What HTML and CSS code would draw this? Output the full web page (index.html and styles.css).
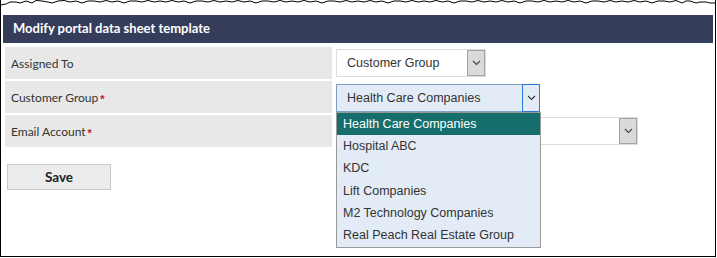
FILE: index.html
```html
<!DOCTYPE html>
<html lang="en">

<head>
    <meta charset="UTF-8">
    <title>Modify portal data sheet template</title>
    <link rel="stylesheet" href="styles.css">
</head>

<body>

    <div class="frame">
        <svg class="torn-edge" width="716" height="8" viewBox="0 0 716 8">
            <polyline fill="none" stroke="#000" stroke-width="1"
                points="0.5,6 6,5 10,3 16,3 20,4 26,2 32,4 36,1.5 42,2 48,3 52,4 58,2 64,1.5 70,3 76,2 82,4 88,2 94,2 100,3 106,1.5 112,3 118,2 124,4 130,2 136,2 142,3 148,1.5 154,3 160,2 166,3 172,1.5 178,3 184,2 190,4 196,2 202,2 208,3 214,1.5 220,3 226,2 232,3 238,1.5 244,3 250,2 256,4 262,2 268,2 274,3 280,1.5 286,3 292,2 298,3 304,1.5 310,3 316,2 322,4 328,2 334,2 340,3 346,1.5 352,3 358,2 364,3 370,1.5 376,3 382,2 388,4 394,2 400,2 406,3 412,1.5 418,3 424,2 430,3 436,1.5 442,3 448,2 454,4 460,2 466,2 472,3 478,1.5 484,3 490,2 496,3 502,1.5 508,3 514,2 520,4 526,2 532,2 538,3 544,1.5 550,3 556,2 562,3 568,1.5 574,3 580,2 586,4 592,2 598,2 604,3 610,1.5 616,3 622,2 628,3 634,1.5 640,3 646,2 652,4 658,2 664,2 670,3 676,1.5 682,4 686,2 690,2 696,4 700,3 706,3 710,4 715.5,4" />
        </svg>

        <div class="panel-header">Modify portal data sheet template</div>

        <div class="form-grid">
            <div class="label-cell">Assigned To</div>
            <div class="value-cell">
                <div class="select select-small">
                    <span class="select-text">Customer Group</span>
                    <span class="select-arrow">
                        <svg width="9" height="6" viewBox="0 0 9 6"><polyline points="1,1 4.5,4.5 8,1" fill="none" stroke="#444" stroke-width="1.1" /></svg>
                    </span>
                </div>
            </div>

            <div class="label-cell">Customer Group<span class="required">*</span></div>
            <div class="value-cell">
                <div class="select select-medium select-open">
                    <span class="select-text">Health Care Companies</span>
                    <span class="select-arrow">
                        <svg width="9" height="6" viewBox="0 0 9 6"><polyline points="1,1 4.5,4.5 8,1" fill="none" stroke="#333" stroke-width="1.1" /></svg>
                    </span>

                    <ul class="dropdown-list">
                        <li class="selected">Health Care Companies</li>
                        <li>Hospital ABC</li>
                        <li>KDC</li>
                        <li>Lift Companies</li>
                        <li>M2 Technology Companies</li>
                        <li>Real Peach Real Estate Group</li>
                    </ul>
                </div>
            </div>

            <div class="label-cell">Email Account<span class="required">*</span></div>
            <div class="value-cell">
                <div class="select select-wide">
                    <span class="select-text"></span>
                    <span class="select-arrow">
                        <svg width="9" height="6" viewBox="0 0 9 6"><polyline points="1,1 4.5,4.5 8,1" fill="none" stroke="#444" stroke-width="1.1" /></svg>
                    </span>
                </div>
            </div>
        </div>

        <button class="btn-save">Save</button>
    </div>

</body>

</html>
```

FILE: styles.css
```css
* {
    margin: 0;
    padding: 0;
    box-sizing: border-box;
}

body {
    background-color: #fff;
    font-family: Lato, "Liberation Sans", sans-serif;
}

.frame {
    position: relative;
    width: 716px;
    height: 257px;
    border: 1px solid #000;
    border-top: none;
    padding: 15px 2px 0 2px;
}

.torn-edge {
    position: absolute;
    top: -1px;
    left: -1px;
}

.panel-header {
    height: 28px;
    background-color: #363d5b;
    border-bottom: 1px solid #2f4a5c;
    color: #fff;
    font-weight: 700;
    font-size: 13px;
    line-height: 27px;
    padding-left: 10px;
}

.form-grid {
    display: grid;
    grid-template-columns: 327px 1fr;
    grid-auto-rows: 32px;
    row-gap: 2px;
    margin: 4px 0 0 2px;
}

.label-cell {
    background-color: #e8e8e8;
    color: #333;
    font-size: 12px;
    display: flex;
    align-items: center;
    padding-left: 6px;
}

.required {
    color: #c8161d;
    font-family: "Liberation Sans", sans-serif;
    font-weight: 700;
    font-size: 11px;
    margin-left: 2px;
    position: relative;
    top: 2px;
}

.value-cell {
    display: flex;
    align-items: center;
    padding-left: 4px;
}

/* fake select boxes */
.select {
    position: relative;
    height: 28px;
    display: flex;
    align-items: center;
    justify-content: space-between;
    border: 1px solid #dcdcdc;
    background-color: #fff;
    font-family: "Liberation Sans", Arial, sans-serif;
    font-size: 12.5px;
    color: #333;
}

.select-text {
    padding-left: 10px;
}

.select-arrow {
    width: 18px;
    height: 26px;
    background-color: #dadada;
    border: 1px solid #a3a3a3;
    display: flex;
    align-items: center;
    justify-content: center;
}

.select-small {
    width: 150px;
}

.select-medium {
    width: 204px;
    height: 28px;
    margin-top: 1px;
}

.select-wide {
    width: 302px;
}

.select-open {
    background-color: #e3ecf6;
    border-color: #7e9fc3;
}

.select-open .select-arrow {
    background-color: #e3ecf6;
    border: 1px solid #2b78d6;
    margin-right: -1px;
    height: 28px;
}

.dropdown-list {
    position: absolute;
    top: 27px;
    left: -1px;
    width: 205px;
    list-style: none;
    background-color: #e3ecf6;
    border: 1px solid #999;
    z-index: 2;
}

.dropdown-list li {
    height: 22.4px;
    line-height: 22.4px;
    padding-left: 6px;
    color: #333;
}

.dropdown-list li.selected {
    background-color: #156e6b;
    color: #fff;
}

.btn-save {
    display: block;
    width: 104px;
    height: 26px;
    margin: 17px 0 0 4px;
    background-color: #ececec;
    border: 1px solid #c9c9c9;
    font-family: Lato, "Liberation Sans", sans-serif;
    font-weight: 700;
    font-size: 13.5px;
    color: #222;
}
```
